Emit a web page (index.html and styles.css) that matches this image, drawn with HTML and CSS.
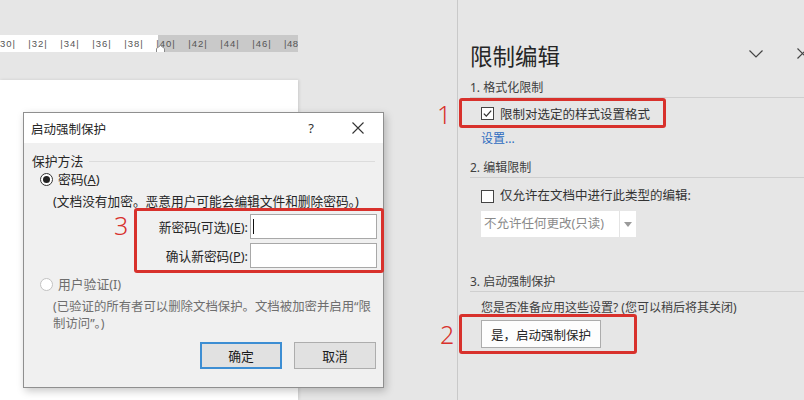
FILE: index.html
```html
<!DOCTYPE html>
<html>

<head>
  <title>限制编辑</title>
  <link rel="stylesheet" href="styles.css">
</head>

<body>
  <div class="app">
    <div class="doc-area">
      <div class="ruler">
        <div class="ruler-track">
          <span class="first">30|</span>
          <span>|32|</span>
          <span>|34|</span>
          <span>|36|</span>
          <span>|38|</span>
          <span>|40|</span>
          <span>|42|</span>
          <span>|44|</span>
          <span>|46|</span>
          <span class="last">|48</span>
        </div>
        <svg class="ruler-marker" width="9" height="8" viewBox="0 0 9 8">
          <path d="M0.5 7.5 V3.5 L4.5 0.5 L8.5 3.5 V7.5 Z" fill="#fff" stroke="#8a8a8a" />
        </svg>
      </div>
      <div class="page"></div>

      <div class="dialog">
        <div class="dialog-title">
          <span class="dialog-caption">启动强制保护</span>
          <span class="dialog-help">?</span>
          <svg class="dialog-close" width="12" height="12" viewBox="0 0 12 12">
            <path d="M0.5 0.5 L11.5 11.5 M11.5 0.5 L0.5 11.5" stroke="#333" stroke-width="1.1" />
          </svg>
        </div>
        <div class="dialog-body">
          <div class="group-head">保护方法</div>

          <div class="radio-row">
            <span class="radio checked"></span>
            <span>密码(<u>A</u>)</span>
          </div>
          <div class="note">(文档没有加密。恶意用户可能会编辑文件和删除密码。)</div>

          <div class="mark-box pw-box">
            <span class="mark-num num-3">3</span>
            <div class="pw-row">
              <label>新密码(可选)(<u>E</u>):</label>
              <div class="pw-input"><span class="caret"></span></div>
            </div>
            <div class="pw-row">
              <label>确认新密码(<u>P</u>):</label>
              <div class="pw-input"></div>
            </div>
          </div>

          <div class="radio-row disabled">
            <span class="radio"></span>
            <span>用户验证(I)</span>
          </div>
          <div class="note note-gray">(已验证的所有者可以删除文档保护。文档被加密并启用“限<br>制访问”。)</div>

          <div class="dialog-buttons">
            <button class="btn btn-default">确定</button>
            <button class="btn">取消</button>
          </div>
        </div>
      </div>
    </div>

    <aside class="pane">
      <div class="pane-head">
        <h1>限制编辑</h1>
        <svg class="pane-chevron" width="14" height="8" viewBox="0 0 14 8">
          <path d="M0.5 0.5 L7 7 L13.5 0.5" fill="none" stroke="#444" stroke-width="1.2" />
        </svg>
        <svg class="pane-close" width="11" height="11" viewBox="0 0 11 11">
          <path d="M0.5 0.5 L10.5 10.5 M10.5 0.5 L0.5 10.5" stroke="#444" stroke-width="1.2" />
        </svg>
      </div>

      <div class="section-head first">1. 格式化限制</div>
      <div class="mark-box box-1">
        <span class="mark-num num-1">1</span>
        <svg class="check" width="13" height="13" viewBox="0 0 13 13">
          <rect x="0.5" y="0.5" width="12" height="12" fill="#fff" stroke="#444" />
          <path d="M2.8 6.6 L5.3 9.1 L10.2 3.6" fill="none" stroke="#333" stroke-width="1.3" />
        </svg>
        <span>限制对选定的样式设置格式</span>
      </div>
      <a class="link">设置...</a>

      <div class="section-head second">2. 编辑限制</div>
      <div class="check-row">
        <svg class="check" width="13" height="13" viewBox="0 0 13 13">
          <rect x="0.5" y="0.5" width="12" height="12" fill="#fff" stroke="#444" />
        </svg>
        <span>仅允许在文档中进行此类型的编辑:</span>
      </div>
      <div class="select">
        <span class="select-text">不允许任何更改(只读)</span>
        <span class="select-arrow">
          <svg width="8" height="5" viewBox="0 0 8 5"><path d="M0 0 H8 L4 5 Z" fill="#9a9a9a" /></svg>
        </span>
      </div>

      <div class="section-head third">3. 启动强制保护</div>
      <div class="ask">您是否准备应用这些设置? (您可以稍后将其关闭)</div>
      <div class="mark-box box-2">
        <span class="mark-num num-2">2</span>
        <button class="pane-btn">是，启动强制保护</button>
      </div>
    </aside>
  </div>
</body>

</html>
```

FILE: styles.css
```css
* {
  box-sizing: border-box;
}

body {
  margin: 0;
  background-color: #e6e6e6;
  font-family: "Noto Sans", "Noto Sans CJK SC", sans-serif;
  font-size: 12px;
  color: #262626;
}

.app {
  display: flex;
  width: 804px;
  height: 400px;
  overflow: hidden;
}

/* document side */

.doc-area {
  position: relative;
  width: 458px;
  height: 400px;
  border-right: 1px solid #c9c9c9;
  background-color: #e6e6e6;
}

.ruler {
  position: relative;
  width: 298px;
  height: 17px;
  margin-top: 35px;
  background: linear-gradient(to right, #fff 0 158px, #c9c9c9 158px);
  overflow: hidden;
}

.ruler-track {
  display: flex;
  margin-left: -10px;
}

.ruler-track span {
  flex: 0 0 32px;
  text-align: center;
  font-family: "Liberation Sans", sans-serif;
  font-size: 9.5px;
  line-height: 17px;
  letter-spacing: 1px;
  white-space: nowrap;
  color: #555;
}

.ruler-track .first {
  padding-left: 10px;
  text-align: left;
}

.ruler-track .last {
  padding-left: 6px;
  text-align: left;
  letter-spacing: 0.5px;
}

.ruler-marker {
  position: absolute;
  left: 156px;
  top: 10px;
}

.page {
  width: 298px;
  height: 320px;
  margin-top: 28px;
  background-color: #fff;
  box-shadow: 1px 0 3px rgba(0, 0, 0, 0.12);
}

/* dialog */

.dialog {
  position: absolute;
  left: 23px;
  top: 112px;
  width: 361px;
  height: 276px;
  border: 1px solid #8f8f8f;
  background-color: #f0f0f0;
  box-shadow: 2px 3px 8px rgba(0, 0, 0, 0.22);
}

.dialog-title {
  display: flex;
  align-items: center;
  height: 30px;
  padding: 0 19px 0 7px;
  background-color: #fff;
  font-size: 12.5px;
}

.dialog-caption {
  flex: 1;
}

.dialog-help {
  margin-right: 38px;
  font-size: 13px;
  color: #333;
}

.dialog-body {
  padding: 9px 8px 0 8px;
}

.group-head {
  display: flex;
  align-items: center;
  line-height: 18px;
  font-size: 12.8px;
}

.group-head::after {
  content: "";
  flex: 1;
  height: 1px;
  margin-left: 6px;
  background-color: #dcdcdc;
}

.radio-row {
  display: flex;
  align-items: center;
  gap: 5px;
  margin-left: 8px;
  line-height: 18px;
  font-size: 12.8px;
}

.radio-row:first-of-type {
  margin-top: 8px;
}

.radio {
  width: 13px;
  height: 13px;
  border: 1px solid #333;
  border-radius: 50%;
  background-color: #fff;
  position: relative;
}

.radio.checked::after {
  content: "";
  position: absolute;
  left: 2px;
  top: 2px;
  width: 7px;
  height: 7px;
  border-radius: 50%;
  background-color: #222;
}

.radio-row.disabled {
  margin-top: 2px;
  color: #6e6e6e;
}

.radio-row.disabled .radio {
  border-color: #c2c2c2;
}

.note {
  margin: 5px 0 0 21px;
  line-height: 16px;
  font-size: 12.7px;
  white-space: nowrap;
}

.note-gray {
  margin-top: 5px;
  line-height: 17px;
  font-size: 12.4px;
  color: #6e6e6e;
}

.mark-box {
  position: relative;
  border: 3px solid #d8312c;
  border-radius: 3px;
}

.mark-num {
  position: absolute;
  font-family: "Noto Sans", sans-serif;
  font-size: 25px;
  font-weight: 300;
  line-height: 30px;
  color: #d8312c;
}

.pw-box {
  width: 250px;
  height: 65px;
  margin: -1px 0 0 102px;
  padding: 3px 4px 0 0;
}

.num-3 {
  left: -23px;
  top: -1px;
}

.pw-row {
  display: flex;
  align-items: center;
  margin-bottom: 4px;
}

.pw-row label {
  width: 111px;
  margin-right: 2px;
  text-align: right;
  font-size: 12.7px;
}

.pw-input {
  display: flex;
  align-items: center;
  width: 127px;
  height: 25px;
  border: 1px solid #a8a8a8;
  background-color: #fff;
}

.caret {
  width: 1px;
  height: 15px;
  margin-left: 2px;
  background-color: #111;
}

.dialog-buttons {
  display: flex;
  justify-content: flex-end;
  gap: 12px;
  margin: 10px -1px 0 0;
}

.btn {
  width: 82px;
  height: 27px;
  border: 1px solid #adadad;
  background-color: #e1e1e1;
  font-family: inherit;
  font-size: 12.8px;
  color: #1a1a1a;
}

.btn-default {
  border: 2px solid #3d8ed3;
}

/* restrict editing pane */

.pane {
  flex: 1;
  padding-left: 12px;
  color: #333;
}

.pane-head {
  display: flex;
  align-items: flex-start;
  height: 30px;
  margin-top: 42px;
}

.pane-head h1 {
  flex: 1;
  margin: 0;
  font-size: 22.5px;
  font-weight: 400;
  line-height: 30px;
  color: #262626;
}

.pane-chevron {
  margin-top: 8px;
  margin-right: 34px;
}

.pane-close {
  margin-top: 6px;
  margin-right: -4px;
}

.section-head {
  padding-bottom: 1px;
  border-bottom: 1px solid #cfcfcf;
  line-height: 16px;
  color: #404040;
}

.section-head.first {
  margin-top: 8px;
}

.section-head.second {
  margin-top: 13px;
}

.section-head.third {
  margin-top: 37px;
}

.box-1 {
  display: flex;
  align-items: center;
  gap: 6px;
  width: 207px;
  height: 30px;
  margin-left: -11px;
  padding-left: 19px;
  font-size: 12.5px;
}

.num-1 {
  left: -25px;
  top: -2px;
}

.link {
  display: block;
  margin: 3px 0 0 11px;
  line-height: 16px;
  color: #2e6cc0;
}

.check-row {
  display: flex;
  align-items: center;
  gap: 6px;
  margin: 10px 0 0 11px;
  line-height: 16px;
  font-size: 12.5px;
}

.select {
  display: flex;
  width: 155px;
  height: 26px;
  margin: 7px 0 0 11px;
  background-color: #fff;
}

.select-text {
  flex: 1;
  padding-left: 3px;
  line-height: 26px;
  color: #8a8a8a;
  font-size: 12.5px;
}

.select-arrow {
  display: flex;
  align-items: center;
  justify-content: center;
  width: 17px;
  border-left: 1px solid #e4e4e4;
}

.ask {
  margin: 8px 0 0 11px;
  line-height: 16px;
  color: #404040;
}

.box-2 {
  width: 178px;
  height: 40px;
  margin: -2px 0 0 -11px;
  padding: 3px 0 0 19px;
}

.num-2 {
  left: -22px;
  top: 2px;
}

.pane-btn {
  width: 120px;
  height: 28px;
  border: 1px solid #acacac;
  background-color: #fdfdfd;
  font-family: inherit;
  font-size: 12.5px;
  color: #262626;
}
```
